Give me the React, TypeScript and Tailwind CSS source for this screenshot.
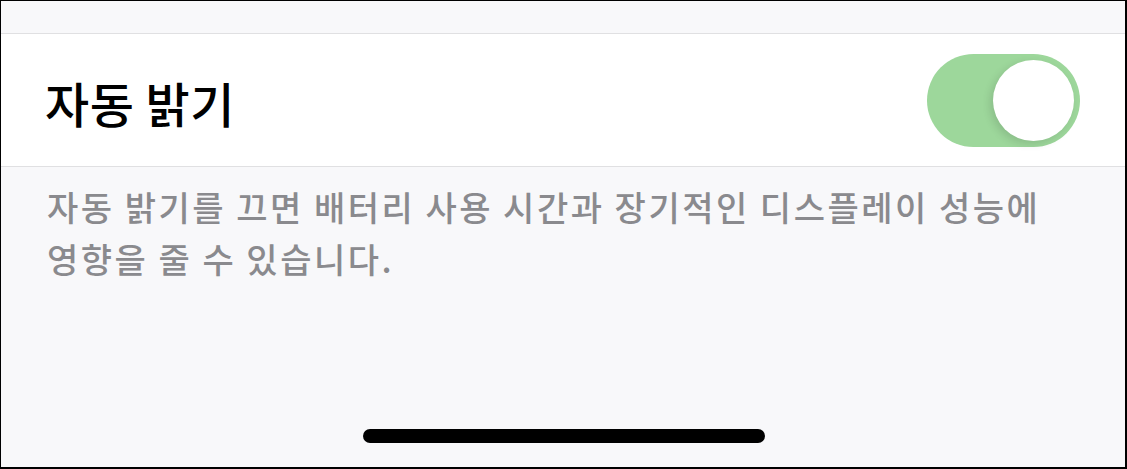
export default function App() {
  return (
    <div
      className="w-[1127px] h-[469px] box-border border-l border-t border-r-2 border-b-2 border-black bg-[#f8f8fa] flex flex-col overflow-hidden"
      style={{ fontFamily: '"Noto Sans CJK KR", "Noto Sans", sans-serif' }}
    >
      {/* top spacer */}
      <div className="h-[33px] shrink-0 border-b border-[#e0e0e2]" />

      {/* Auto brightness row */}
      <div className="h-[133px] shrink-0 bg-white border-b border-[#e0e0e2] flex items-center justify-between pl-[44px] pr-[45px]">
        <span className="text-[48px] font-medium text-black tracking-[0.5px] leading-none pt-[4px]">
          자동 밝기
        </span>
        <div className="w-[153px] h-[93px] rounded-full bg-[#9dd79b] flex items-center justify-end pr-[6px]">
          <div className="w-[81px] h-[81px] rounded-full bg-white shadow-[-3px_3px_8px_rgba(0,0,0,0.12)]" />
        </div>
      </div>

      {/* footer note */}
      <p className="pl-[46px] pr-[40px] pt-[14px] text-[34px] leading-[52px] text-[#8a8a8e] font-medium tracking-[2.5px] whitespace-nowrap">
        자동 밝기를 끄면 배터리 사용 시간과 장기적인 디스플레이 성능에
        <br />
        영향을 줄 수 있습니다.
      </p>

      {/* home indicator */}
      <div className="mt-auto mb-[24px] flex justify-center">
        <div className="w-[402px] h-[14px] rounded-full bg-black ml-[1px]" />
      </div>
    </div>
  );
}
